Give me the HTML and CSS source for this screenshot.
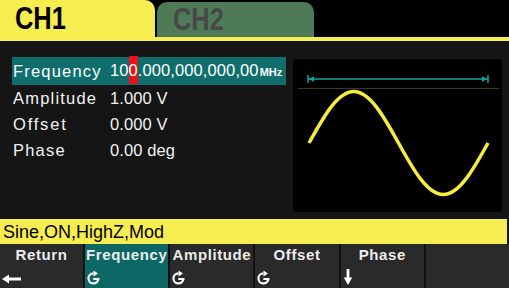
FILE: index.html
```html
<!DOCTYPE html>
<html lang="en">
<head>
    <meta charset="UTF-8">
    <title>CH1 Sine</title>
    <link rel="stylesheet" href="styles.css">
</head>
<body>
    <div class="tabs">
        <div class="tab tab-active"><span class="tab-text">CH1</span></div>
        <div class="tab tab-idle"><span class="tab-text">CH2</span></div>
    </div>

    <div class="main">
        <div class="params">
            <div class="row row-sel">
                <span class="label">Frequency</span>
                <span class="value">10<span class="cursor">0</span>.000,000,000,00<span class="unit">MHz</span></span>
            </div>
            <div class="row">
                <span class="label">Amplitude</span>
                <span class="value">1.000 V</span>
            </div>
            <div class="row">
                <span class="label label-wide">Offset</span>
                <span class="value">0.000 V</span>
            </div>
            <div class="row">
                <span class="label">Phase</span>
                <span class="value">0.00 deg</span>
            </div>
        </div>

        <div class="screen">
            <svg width="209" height="153" viewBox="0 0 209 153">
                <!-- period marker -->
                <line x1="15" y1="20" x2="195" y2="20" stroke="#17a39c" stroke-width="1.5"/>
                <line x1="15" y1="16" x2="15" y2="24" stroke="#17a39c" stroke-width="1.5"/>
                <line x1="195" y1="16" x2="195" y2="24" stroke="#17a39c" stroke-width="1.5"/>
                <polygon points="15.5,20 21,17.3 21,22.7" fill="#17a39c"/>
                <polygon points="194.5,20 189,17.3 189,22.7" fill="#17a39c"/>
                <line x1="5" y1="29.5" x2="206" y2="29.5" stroke="#3a3a1e" stroke-width="1"/>
                <!-- one period of the sine -->
                <path d="M16 84 C30.6 57.6 44.6 32.5 60.75 32.5 C76.9 32.5 90.9 57.6 105.5 84 C120.1 110.4 134.1 135.5 150.25 135.5 C166.4 135.5 180.4 110.4 195 84"
                      fill="none" stroke="#f5ed3a" stroke-width="3.5"/>
            </svg>
        </div>
    </div>

    <div class="status">Sine,ON,HighZ,Mod</div>

    <div class="softkeys">
        <div class="key">
            <span class="key-label">Return</span>
            <svg class="key-icon" width="19" height="12" viewBox="0 0 19 12">
                <path d="M5 6 H19" stroke="#fff" stroke-width="3"/>
                <polygon points="0,6 7,1.5 7,10.5" fill="#fff"/>
            </svg>
        </div>
        <div class="key key-on">
            <span class="key-label">Frequency</span>
            <svg class="key-icon" width="13" height="15" viewBox="0 0 13 15">
                <path d="M6.5 3.4 A5 5 0 1 0 11.4 9 H6.3" fill="none" stroke="#fff" stroke-width="2.2"/>
                <polygon points="11,3.4 6.5,0.4 6.5,6.4" fill="#fff"/>
            </svg>
        </div>
        <div class="key">
            <span class="key-label">Amplitude</span>
            <svg class="key-icon" width="13" height="15" viewBox="0 0 13 15">
                <path d="M6.5 3.4 A5 5 0 1 0 11.4 9 H6.3" fill="none" stroke="#fff" stroke-width="2.2"/>
                <polygon points="11,3.4 6.5,0.4 6.5,6.4" fill="#fff"/>
            </svg>
        </div>
        <div class="key">
            <span class="key-label">Offset</span>
            <svg class="key-icon" width="13" height="15" viewBox="0 0 13 15">
                <path d="M6.5 3.4 A5 5 0 1 0 11.4 9 H6.3" fill="none" stroke="#fff" stroke-width="2.2"/>
                <polygon points="11,3.4 6.5,0.4 6.5,6.4" fill="#fff"/>
            </svg>
        </div>
        <div class="key">
            <span class="key-label">Phase</span>
            <svg class="key-icon" width="10" height="16" viewBox="0 0 10 16">
                <path d="M5 0 V10" stroke="#fff" stroke-width="2.8"/>
                <polygon points="5,16 0.8,8.5 9.2,8.5" fill="#fff"/>
            </svg>
        </div>
        <div class="key"></div>
    </div>
</body>
</html>
```

FILE: styles.css
```css
body {
    margin: 0;
    width: 509px;
    height: 288px;
    overflow: hidden;
    background-color: #151515;
    color: #f2f2f2;
    font-family: "Liberation Sans", Arial, sans-serif;
}

/* Channel tabs */
.tabs {
    display: flex;
    height: 37px;
    background-color: #000;
    border-bottom: 4px solid #f6ee50;
}

.tab {
    box-sizing: border-box;
    font-weight: bold;
    font-size: 31px;
    line-height: 38px;
}

/* the panel font is a condensed one */
.tab-text {
    display: inline-block;
    transform: scaleX(0.82);
    transform-origin: left center;
}

.tab-active {
    width: 155px;
    padding-left: 15px;
    background-color: #f6ee50;
    color: #000;
    border-radius: 0 10px 0 0;
}

.tab-idle {
    width: 157px;
    height: 35px;
    margin: 2px 0 0 2px;
    padding-left: 16px;
    line-height: 36px;
    background-color: #4e7a57;
    color: #474747;
    border-radius: 10px 10px 0 0;
}

/* Parameter list + waveform */
.main {
    display: flex;
    height: 178px;
}

.params {
    width: 274px;
    padding: 16px 0 0 12px;
}

.row {
    display: flex;
    align-items: center;
    height: 26px;
    font-size: 16.5px;
}

.row-sel {
    height: 28px;
    background-color: #0f6e6c;
    color: #fff;
}

.label {
    width: 97px;
    padding-left: 1px;
    letter-spacing: 1.2px;
}

.label-wide {
    letter-spacing: 1.8px;
}

.value {
    line-height: 28px;
    letter-spacing: 0.1px;
}

.cursor {
    display: inline-block;
    background-color: #e8141b;
}

.unit {
    font-size: 11px;
    font-weight: bold;
    letter-spacing: 0;
    margin-left: 1px;
}

.screen {
    width: 209px;
    height: 153px;
    margin: 18px 0 0 7px;
    background-color: #000;
    border-radius: 4px;
}

.screen svg {
    display: block;
}

/* Status line */
.status {
    width: 504px;
    height: 25px;
    padding-left: 3px;
    background-color: #f6ee50;
    color: #000;
    font-size: 18px;
    line-height: 26px;
}

/* Soft keys */
.softkeys {
    display: grid;
    grid-template-columns: repeat(6, 1fr);
    gap: 2px;
    height: 44px;
    background-color: #101010;
}

.key {
    display: flex;
    flex-direction: column;
    background-color: #2a2a2a;
}

.key-on {
    background-color: #0d6765;
}

.key-label {
    padding-top: 2px;
    text-align: center;
    font-size: 15px;
    font-weight: bold;
    line-height: 17px;
    letter-spacing: 0.6px;
    color: #ececec;
    white-space: nowrap;
}

.key-icon {
    display: block;
    margin: auto 0 3px 2px;
}
```
